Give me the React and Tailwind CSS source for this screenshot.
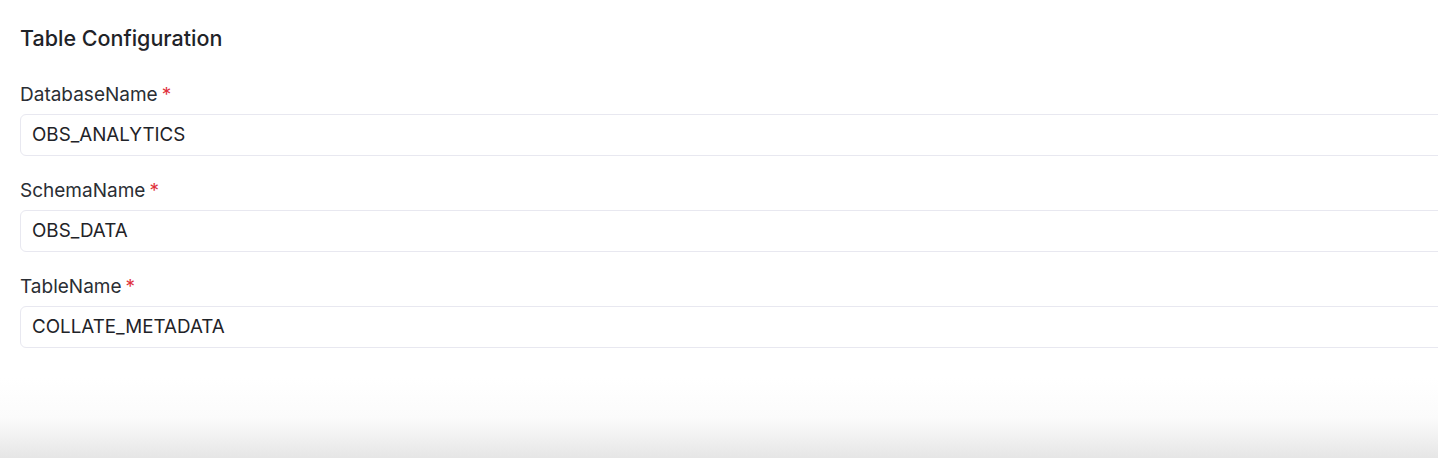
export default function App() {
  const fields = [
    { label: "DatabaseName", value: "OBS_ANALYTICS" },
    { label: "SchemaName", value: "OBS_DATA" },
    { label: "TableName", value: "COLLATE_METADATA" },
  ];
  return (
    <div className="w-[1438px] h-[458px] overflow-hidden bg-white flex flex-col" style={{ fontFamily: "Inter, 'Liberation Sans', sans-serif" }}>
      <div className="pl-5 pt-[26px] w-[1470px]">
        <h2 className="text-[21.5px] leading-6 font-medium text-[#1f2328]">Table Configuration</h2>
        <div className="mt-[33px] flex flex-col gap-[23px]">
          {fields.map((f) => (
            <div key={f.label} className="flex flex-col gap-[7px]">
              <label className="text-[19px] leading-6 text-[#2a2e34]">
                {f.label}
                <span className="text-[#e0323c] ml-1">*</span>
              </label>
              <div className="h-[42px] border border-[#e8e8f0] rounded-md flex items-center px-[11px] text-[18.8px] text-[#1f2328]">
                {f.value}
              </div>
            </div>
          ))}
        </div>
      </div>
      <div className="flex-1 mt-[30px] bg-gradient-to-b from-white via-[#fbfbfb] to-[#e6e6e6]"></div>
    </div>
  );
}
